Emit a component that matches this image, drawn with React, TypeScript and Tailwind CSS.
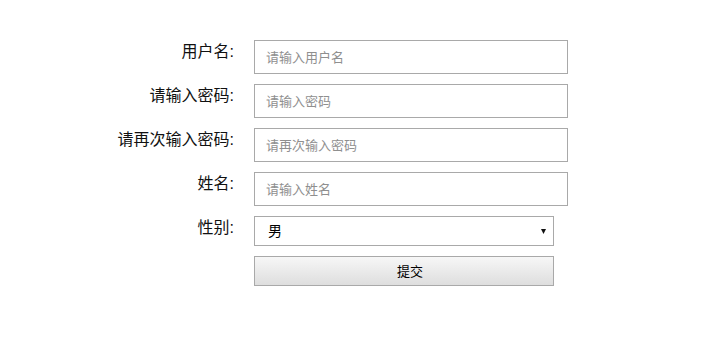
import { useState } from 'react';

const FIELDS = [
  { key: 'username', label: '用户名:', placeholder: '请输入用户名', type: 'text' },
  { key: 'password', label: '请输入密码:', placeholder: '请输入密码', type: 'password' },
  { key: 'confirm', label: '请再次输入密码:', placeholder: '请再次输入密码', type: 'password' },
  { key: 'name', label: '姓名:', placeholder: '请输入姓名', type: 'text' },
];

const FONT = "font-['Liberation_Sans','Noto_Sans_CJK_SC',sans-serif]";

export default function App() {
  const [values, setValues] = useState<Record<string, string>>({});
  const [gender, setGender] = useState('男');

  return (
    <div className={`w-[716px] h-[352px] bg-white pt-[40px] pl-[100px] ${FONT}`}>
      <form className="flex flex-col gap-[10px]" onSubmit={e => e.preventDefault()}>
        {FIELDS.map(f => (
          <div key={f.key} className="flex items-start">
            <label className="w-[134px] text-right text-[16px] leading-6 text-[#111]">{f.label}</label>
            <input
              type="text"
              placeholder={f.placeholder}
              value={values[f.key] ?? ''}
              onChange={e => setValues({ ...values, [f.key]: e.target.value })}
              className="ml-[20px] w-[314px] h-[34px] border border-[#a9a9a9] px-[11px] text-[13px] text-[#333] placeholder:text-[#8f8f8f] outline-none"
            />
          </div>
        ))}

        {/* Gender */}
        <div className="flex items-start">
          <label className="w-[134px] text-right text-[16px] leading-6 text-[#111]">性别:</label>
          <div className="relative ml-[20px] w-[300px] h-[30px]">
            <select
              value={gender}
              onChange={e => setGender(e.target.value)}
              className="w-full h-full appearance-none border border-[#a9a9a9] bg-white pl-[13px] text-[14px] text-black outline-none"
            >
              <option value="男">男</option>
              <option value="女">女</option>
            </select>
            <svg className="absolute right-[8px] top-[13px] w-[5px] h-[5px] pointer-events-none" viewBox="0 0 5 5">
              <path d="M0 0H5L2.5 5Z" fill="#111" />
            </svg>
          </div>
        </div>

        {/* Submit */}
        <div className="flex">
          <button
            type="submit"
            className="ml-[154px] w-[300px] h-[30px] border border-[#a9a9a9] bg-gradient-to-b from-[#f7f7f7] to-[#dedede] pl-[12px] pt-[2px] text-[13px] text-black"
          >
            提交
          </button>
        </div>
      </form>
    </div>
  );
}
